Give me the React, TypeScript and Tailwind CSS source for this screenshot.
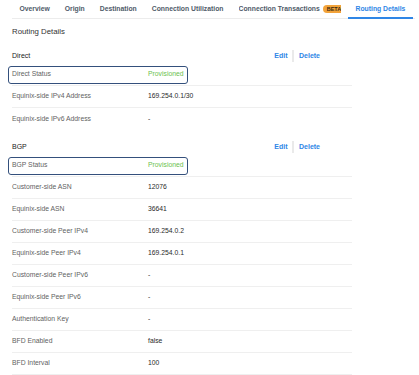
const tabs = [
  { label: "Overview" },
  { label: "Origin" },
  { label: "Destination" },
  { label: "Connection Utilization" },
  { label: "Connection Transactions", beta: true },
  { label: "Routing Details", active: true },
];

type Row = { label: string; value: string; status?: boolean };

const sections: { title: string; rows: Row[]; lastLine: boolean }[] = [
  {
    title: "Direct",
    lastLine: false,
    rows: [
      { label: "Direct Status", value: "Provisioned", status: true },
      { label: "Equinix-side IPv4 Address", value: "169.254.0.1/30" },
      { label: "Equinix-side IPv6 Address", value: "-" },
    ],
  },
  {
    title: "BGP",
    lastLine: true,
    rows: [
      { label: "BGP Status", value: "Provisioned", status: true },
      { label: "Customer-side ASN", value: "12076" },
      { label: "Equinix-side ASN", value: "36641" },
      { label: "Customer-side Peer IPv4", value: "169.254.0.2" },
      { label: "Equinix-side Peer IPv4", value: "169.254.0.1" },
      { label: "Customer-side Peer IPv6", value: "-" },
      { label: "Equinix-side Peer IPv6", value: "-" },
      { label: "Authentication Key", value: "-" },
      { label: "BFD Enabled", value: "false" },
      { label: "BFD Interval", value: "100" },
    ],
  },
];

const App = () => {
  return (
    <div
      className="w-[419px] h-[375px] overflow-hidden bg-white"
      style={{ fontFamily: '"Liberation Sans", Arial, sans-serif' }}
    >
      {/* tabs */}
      <div className="ml-[12px] mr-[4px] h-[19px] flex border-b border-[#ececec]">
        {tabs.map((tab, i) => (
          <div
            key={i}
            className={`h-[19px] px-[7.5px] flex items-center text-[6.8px] font-bold whitespace-nowrap ${
              tab.active
                ? "text-[#2f86e6] border-b-2 border-[#2f86e6] pt-[1px]"
                : "text-[#4f5b69] pb-[1px]"
            }`}
          >
            {tab.beta ? (
              <span className="w-[102px] overflow-hidden flex items-center">
                <span>{tab.label}</span>
                <span className="ml-[3px] px-[4px] h-[8px] leading-[8px] rounded-full bg-[#f2a33a] text-[#3a2a10] text-[5.5px] font-bold">
                  BETA
                </span>
              </span>
            ) : (
              tab.label
            )}
          </div>
        ))}
      </div>

      <div className="px-[12px]">
        <div className="mt-[6px] h-[14px] flex items-center text-[7.8px] text-[#333]">
          Routing Details
        </div>

        {sections.map((section, si) => (
          <div key={si} className="mt-[7px]">
            <div className="w-[308px] h-[18px] pt-[2px] flex items-center justify-between">
              <span className="text-[7px] font-medium text-[#222]">
                {section.title}
              </span>
              <div className="flex items-center text-[7px] font-bold text-[#2f86e6]">
                <span>Edit</span>
                <span className="mx-[5px] w-[1.5px] h-[12px] bg-[#eaeaea]" />
                <span>Delete</span>
              </div>
            </div>

            <div className="w-[340px]">
              {section.rows.map((row, ri) => {
                const last = ri === section.rows.length - 1;
                return (
                  <div
                    key={ri}
                    className={`relative h-[22px] flex items-center text-[6.8px] ${
                      !last || section.lastLine ? "border-b border-[#efefef]" : ""
                    }`}
                  >
                    <span className="w-[136px] text-[#5f5f5f]">{row.label}</span>
                    <span
                      className={row.status ? "text-[#6cbf4f]" : "text-[#2a2a2a]"}
                    >
                      {row.value}
                    </span>
                    {row.status && (
                      <div className="absolute left-[-4px] top-[2px] w-[180px] h-[18px] rounded-[3px] border-[1.5px] border-[#34507c]" />
                    )}
                  </div>
                );
              })}
            </div>
          </div>
        ))}
      </div>
    </div>
  );
};

export default App;
